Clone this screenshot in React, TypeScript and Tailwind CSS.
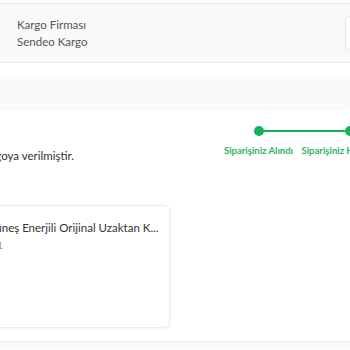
const steps = ['Siparişiniz Alındı', 'Siparişiniz Hazırlanıyor'];

const App = () => {
	return (
		<div className="w-[350px] h-[350px] overflow-hidden bg-white font-['Lato',sans-serif]">
			<div className="pt-[3px]">
				<div className="flex justify-between items-center h-[60px] -ml-4 mr-[-60px] bg-[#f9f9f9] border border-[#ebebeb]">
					<div className="flex flex-col gap-[4px] pl-8 text-[11.5px] leading-[13px] text-[#555]">
						<span>Kargo Firması</span>
						<span>Sendeo Kargo</span>
					</div>
					<div className="h-[34px] w-[64px] bg-white border border-[#e6e6e6] rounded-sm" />
				</div>
			</div>
			<div className="mt-[13px] h-[32px] bg-[#fafafa] shadow-[0_2px_3px_rgba(0,0,0,0.04)]" />
			<div className="flex justify-between items-start h-[79px] mt-[18px]">
				<p className="mt-[22px] -ml-[73px] text-[11.5px] leading-4 text-[#333] whitespace-nowrap">
					Ürününüz kargoya verilmiştir.
				</p>
				<div className="flex mr-[-45px]">
					{steps.map((s, i) => (
						<div key={s} className="flex flex-col items-center w-[91px]">
							<div className="flex items-center w-full h-[10px]">
								<div className={i === 0 ? 'flex-1' : 'flex-1 h-[2px] bg-[#12b54f]'} />
								<span className="w-[10px] h-[10px] rounded-full bg-[#12b54f]" />
								<div className="flex-1 h-[2px] bg-[#12b54f]" />
							</div>
							<span className="mt-[9px] text-[9.5px] leading-3 font-bold text-[#2bb563] whitespace-nowrap">{s}</span>
						</div>
					))}
				</div>
			</div>
			<div className="-ml-4 w-[186px] h-[123px] bg-white border border-[#ececec] rounded-md shadow-[0_1px_4px_rgba(0,0,0,0.06)] pt-[14px] pl-4">
				<p className="-ml-[14px] text-[11.5px] leading-4 text-[#333] whitespace-nowrap">
					Güneş Enerjili Orijinal Uzaktan K...
				</p>
				<p className="mt-[3px] -ml-[30px] text-[10px] leading-3 text-[#999]">Adet: 1</p>
			</div>
			<div className="mt-[13px] h-[10px] border-t border-[#eeeeee] bg-gradient-to-b from-[#f7f7f7] to-white" />
		</div>
	);
};

export default App;
